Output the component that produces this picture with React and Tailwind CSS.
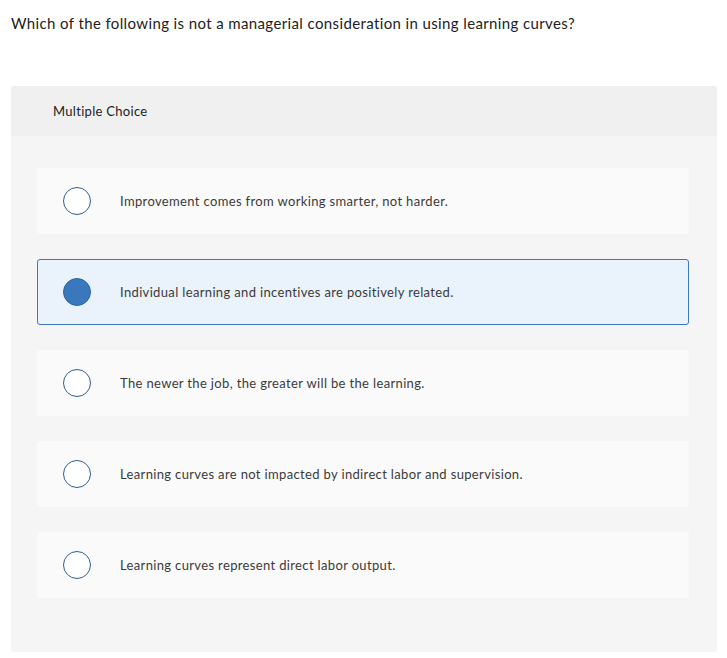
import React from 'react';

const options = [
  'Improvement comes from working smarter, not harder.',
  'Individual learning and incentives are positively related.',
  'The newer the job, the greater will be the learning.',
  'Learning curves are not impacted by indirect labor and supervision.',
  'Learning curves represent direct labor output.'
];

const App = () => {
  const selected = 1;

  return (
    <div className="bg-white min-h-[658px] pt-[14px] pl-[11px] pr-[10px] font-['Lato',sans-serif] text-[#333]">
      {/* Question */}
      <p className="text-[15px] leading-[19px] tracking-[0.38px] text-[#222]">
        Which of the following is not a managerial consideration in using learning curves?
      </p>

      {/* Answer panel */}
      <div className="mt-[53px] rounded-[3px] bg-[#f5f5f5] overflow-hidden">
        <div className="h-[50px] bg-[#f0f0f0] flex items-center pl-[42px] pt-[1px] text-[13px] tracking-[0.3px] text-[#222]">
          Multiple Choice
        </div>
        <div className="pt-[32px] pb-[54px] pl-[26px] pr-[28px] flex flex-col gap-[25px]">
          {options.map((opt, i) => {
            const isSel = i === selected;
            return (
              <div
                key={i}
                className={`h-[66px] rounded-[3px] flex items-center pl-[25px] border ${
                  isSel ? 'bg-[#eaf2fb] border-[#3b78c0]' : 'bg-[#fafafa] border-transparent'
                }`}
              >
                <span
                  className={`w-[28px] h-[28px] rounded-full shrink-0 border-[1.5px] ${
                    isSel ? 'bg-[#3a77bd] border-[#2f66a6]' : 'bg-white border-[#2f5f8f]'
                  }`}
                />
                <span className="ml-[29px] pt-[1px] text-[13px] tracking-[0.35px] text-[#3a3a3a]">{opt}</span>
              </div>
            );
          })}
        </div>
      </div>
    </div>
  );
};

export default App;
